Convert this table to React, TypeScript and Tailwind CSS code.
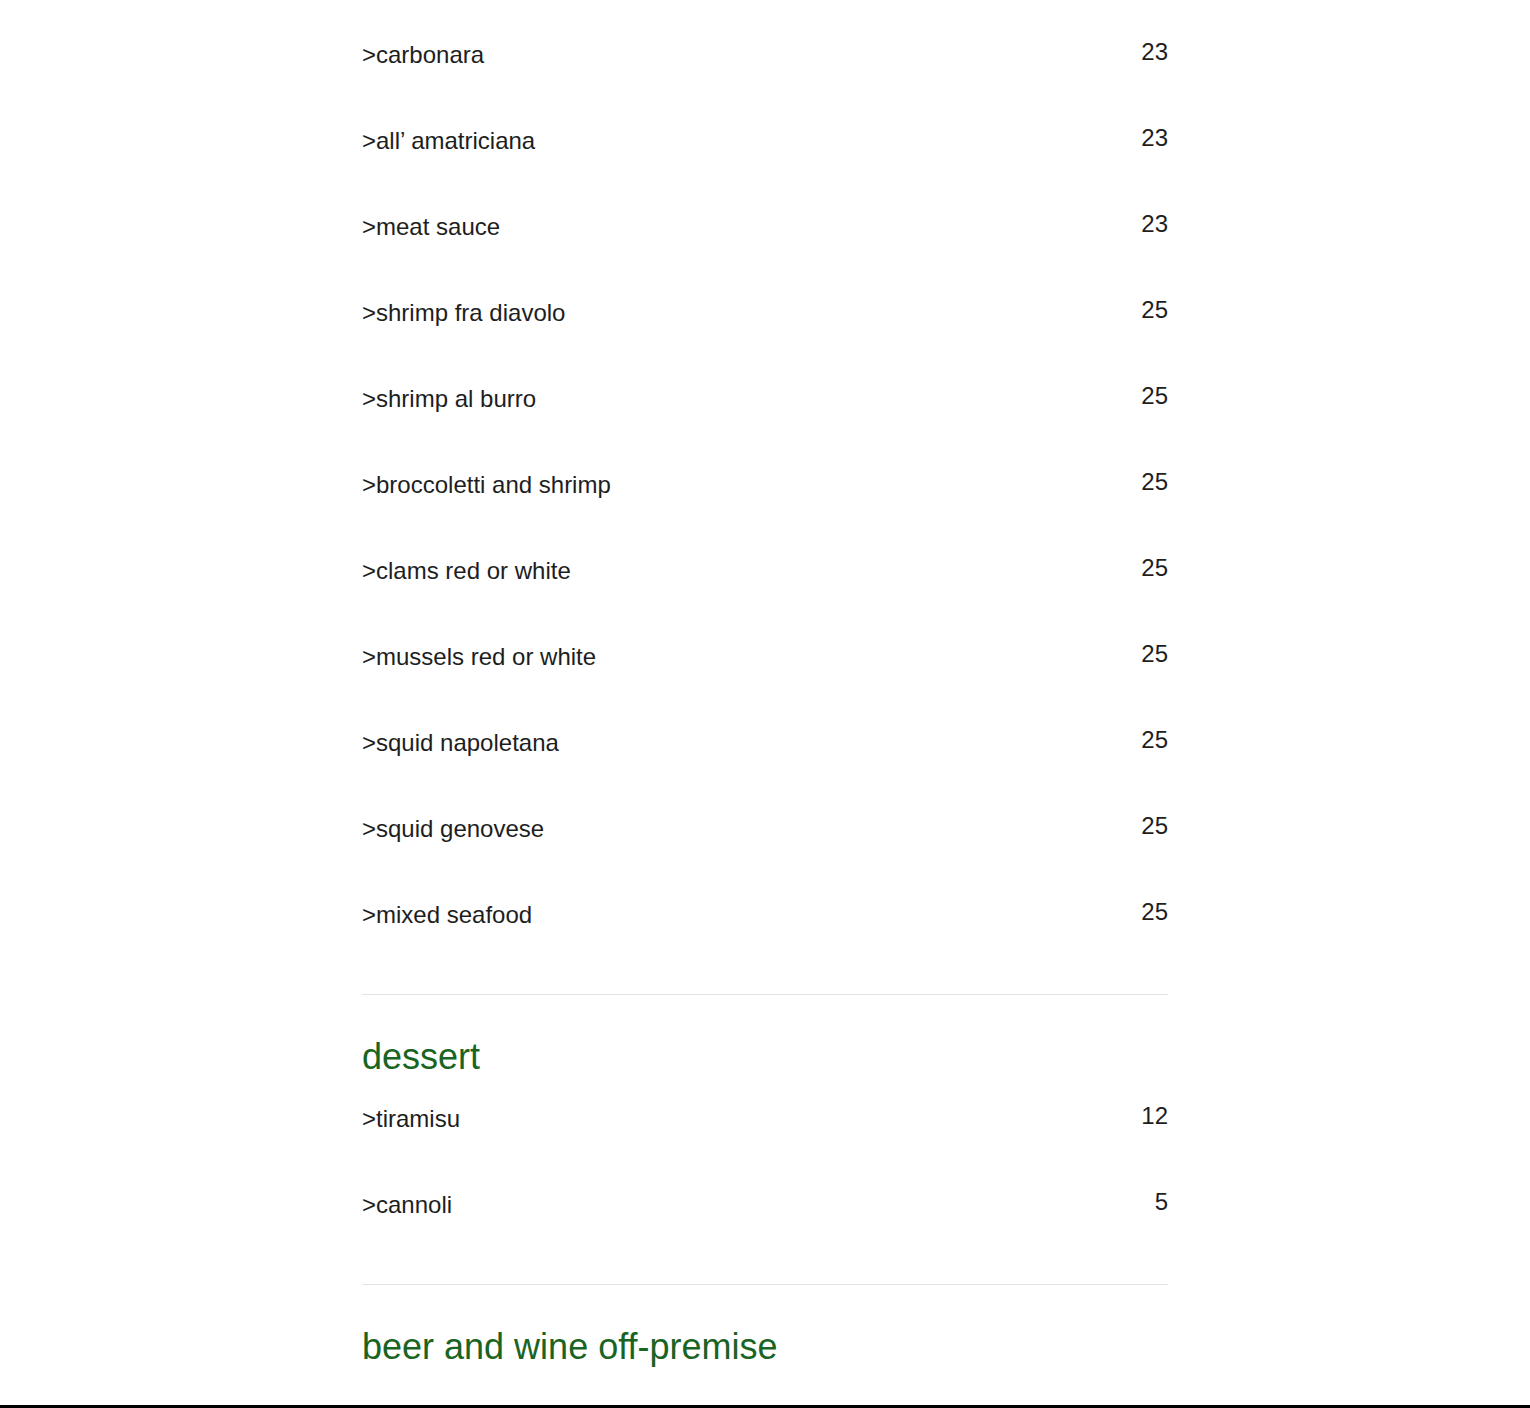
import React from "react";

type Item = { name: string; price: string };

const pasta: Item[] = [
  { name: "carbonara", price: "23" },
  { name: "all\u2019 amatriciana", price: "23" },
  { name: "meat sauce", price: "23" },
  { name: "shrimp fra diavolo", price: "25" },
  { name: "shrimp al burro", price: "25" },
  { name: "broccoletti and shrimp", price: "25" },
  { name: "clams red or white", price: "25" },
  { name: "mussels red or white", price: "25" },
  { name: "squid napoletana", price: "25" },
  { name: "squid genovese", price: "25" },
  { name: "mixed seafood", price: "25" },
];

const dessert: Item[] = [
  { name: "tiramisu", price: "12" },
  { name: "cannoli", price: "5" },
];

const MenuRow = ({ item }: { item: Item }) => (
  <div className="flex h-[86px] justify-between text-[24px] text-[#1e1e1e]">
    <span className="mt-[29px] leading-[28px]">&gt;{item.name}</span>
    <span className="mt-[26px] leading-[28px]">{item.price}</span>
  </div>
);

const Heading = ({ children }: { children: React.ReactNode }) => (
  <h2 className="text-[36px] leading-[38px] text-[#196423]">{children}</h2>
);

export default function App() {
  return (
    <div
      className="flex h-[1408px] flex-col overflow-hidden bg-white"
      style={{ fontFamily: '"Liberation Sans", Arial, sans-serif' }}
    >
      <div className="mx-auto flex w-[806px] flex-1 flex-col pt-[12px]">
        {pasta.map((item) => (
          <MenuRow key={item.name} item={item} />
        ))}
        <hr className="mt-[36px] mb-[43px] border-t border-[#e3e3e3]" />
        <Heading>dessert</Heading>
        {dessert.map((item) => (
          <MenuRow key={item.name} item={item} />
        ))}
        <hr className="mt-[36px] mb-[43px] border-t border-[#e3e3e3]" />
        <Heading>beer and wine off-premise</Heading>
      </div>
      <div className="h-[3px] w-full bg-black" />
    </div>
  );
}
